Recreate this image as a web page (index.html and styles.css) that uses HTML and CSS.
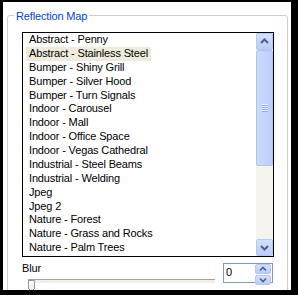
FILE: index.html
```html
<!DOCTYPE html>
<html>
<head>
<meta charset="utf-8">
<link rel="stylesheet" href="styles.css">
</head>
<body>
<div class="panel">
  <div class="group">
    <span class="legend">Reflection Map</span>
    <div class="listbox">
      <ul class="items">
        <li><span class="txt">Abstract - Penny</span></li>
        <li><span class="txt sel">Abstract - Stainless Steel</span></li>
        <li><span class="txt">Bumper - Shiny Grill</span></li>
        <li><span class="txt">Bumper - Silver Hood</span></li>
        <li><span class="txt">Bumper - Turn Signals</span></li>
        <li><span class="txt">Indoor - Carousel</span></li>
        <li><span class="txt">Indoor - Mall</span></li>
        <li><span class="txt">Indoor - Office Space</span></li>
        <li><span class="txt">Indoor - Vegas Cathedral</span></li>
        <li><span class="txt">Industrial - Steel Beams</span></li>
        <li><span class="txt">Industrial - Welding</span></li>
        <li><span class="txt">Jpeg</span></li>
        <li><span class="txt">Jpeg 2</span></li>
        <li><span class="txt">Nature - Forest</span></li>
        <li><span class="txt">Nature - Grass and Rocks</span></li>
        <li><span class="txt">Nature - Palm Trees</span></li>
      </ul>
      <div class="vscroll">
        <div class="sbtn">
          <svg width="15" height="15" viewBox="0 0 15 15"><polyline points="4,9 7.5,5.5 11,9" fill="none" stroke="#4d6185" stroke-width="2"/></svg>
        </div>
        <div class="strack">
          <div class="sthumb">
            <svg width="8" height="8" viewBox="0 0 8 8">
              <rect x="1" y="0" width="6" height="1" fill="#eef4fe"/>
              <rect x="1" y="1" width="6" height="1" fill="#8cabee"/>
              <rect x="1" y="2" width="6" height="1" fill="#eef4fe"/>
              <rect x="1" y="3" width="6" height="1" fill="#8cabee"/>
              <rect x="1" y="4" width="6" height="1" fill="#eef4fe"/>
              <rect x="1" y="5" width="6" height="1" fill="#8cabee"/>
              <rect x="1" y="6" width="6" height="1" fill="#eef4fe"/>
              <rect x="1" y="7" width="6" height="1" fill="#8cabee"/>
            </svg>
          </div>
        </div>
        <div class="sbtn">
          <svg width="15" height="15" viewBox="0 0 15 15"><polyline points="4,6 7.5,9.5 11,6" fill="none" stroke="#4d6185" stroke-width="2"/></svg>
        </div>
      </div>
    </div>
    <div class="blur-row">
      <div class="blur-left">
        <div class="label">Blur</div>
        <div class="slider">
          <span class="track"></span>
          <svg class="knob" width="9" height="14" viewBox="0 0 9 14">
            <defs><linearGradient id="kg" x1="0" y1="0" x2="0" y2="1"><stop offset="0" stop-color="#ffffff"/><stop offset="1" stop-color="#e6e5df"/></linearGradient></defs>
            <path d="M1.5,0.5 H7.5 V8.5 L4.5,11.5 L1.5,8.5 Z" fill="url(#kg)" stroke="#8f989e"/>
            <path d="M1.5,8.5 L4.5,11.5 L7.5,8.5" fill="none" stroke="#3dad3d"/>
          </svg>
        </div>
      </div>
      <div class="spin">
        <div class="spin-val">0</div>
        <div class="spin-btns">
          <div class="spb">
            <svg width="14" height="8" viewBox="0 0 14 8"><polyline points="4,5.5 7,2.5 10,5.5" fill="none" stroke="#4d6185" stroke-width="1.6"/></svg>
          </div>
          <div class="spb">
            <svg width="14" height="8" viewBox="0 0 14 8"><polyline points="4,2.5 7,5.5 10,2.5" fill="none" stroke="#4d6185" stroke-width="1.6"/></svg>
          </div>
        </div>
      </div>
    </div>
  </div>
</div>
</body>
</html>
```

FILE: styles.css
```css
html, body {
  margin: 0;
  padding: 0;
}
body {
  background: #000;
  width: 298px;
  height: 295px;
  overflow: hidden;
  font-family: "Liberation Sans", Arial, sans-serif;
  font-size: 11px;
  letter-spacing: -0.15px;
  color: #000;
}
.panel {
  margin: 2px 0 0 3px;
  width: 288px;
  height: 288px;
  background: #fff;
  overflow: hidden;
}
.group {
  position: relative;
  margin: 13px 3px 0 4px;
  height: 320px;
  border: 1px solid #d0d0bf;
  border-radius: 3px;
  padding: 16px 13px 0 14px;
}
.legend {
  position: absolute;
  left: 6px;
  top: -6px;
  padding: 0 2px;
  background: #fff;
  color: #0046d5;
  line-height: 13px;
}
.listbox {
  display: flex;
  width: 252px;
  height: 225px;
  box-sizing: border-box;
  border: 1px solid #000;
  background: #fff;
}
.items {
  flex: 1;
  margin: 0;
  padding: 0 0 0 3px;
  list-style: none;
  overflow: hidden;
}
.items li {
  height: 13.875px;
  line-height: 13.875px;
  white-space: nowrap;
}
.txt {
  display: inline-block;
  padding: 0 3px;
}
.sel {
  background: #efebdc;
}
.vscroll {
  width: 17px;
  display: flex;
  flex-direction: column;
  background: #f5f4ef;
}
.sbtn {
  height: 17px;
  box-sizing: border-box;
  border: 1px solid #b5c8f3;
  border-radius: 2px;
  background: linear-gradient(to bottom, #d3e0fd, #b9cdf9);
  display: flex;
  align-items: center;
  justify-content: center;
}
.sbtn svg {
  display: block;
}
.strack {
  flex: 1;
  display: flex;
  flex-direction: column;
}
.sthumb {
  height: 116px;
  box-sizing: border-box;
  border: 1px solid #adc3f3;
  border-radius: 2px;
  background: linear-gradient(to right, #cbdafc, #bccffa);
  display: flex;
  align-items: center;
  justify-content: center;
}
.sthumb svg {
  display: block;
}
.blur-row {
  display: flex;
  align-items: flex-start;
  margin-top: 5px;
  width: 252px;
}
.blur-left {
  flex: 1;
}
.label {
  line-height: 13px;
}
.slider {
  position: relative;
  margin-top: 4px;
  height: 12px;
}
.track {
  display: block;
  margin: 2px 8px 0 6px;
  height: 3px;
  border-top: 1px solid #a4a39d;
  border-left: 1px solid #a4a39d;
  border-bottom: 1px solid #fff;
  background: #f1efe6;
}
.knob {
  position: absolute;
  left: 5px;
  top: 1px;
  display: block;
}
.spin {
  display: flex;
  width: 50px;
  height: 20px;
  box-sizing: border-box;
  margin: 1px 1px 0 0;
  border: 1px solid #7f9db9;
  background: #fff;
}
.spin-val {
  flex: 1;
  padding-left: 2px;
  line-height: 17px;
}
.spin-btns {
  width: 16px;
  display: flex;
  flex-direction: column;
  gap: 1px;
  padding: 0 1px 0 0;
}
.spb {
  flex: 1;
  box-sizing: border-box;
  border: 1px solid #b5c8f3;
  border-radius: 2px;
  background: linear-gradient(to bottom, #d3e0fd, #b9cdf9);
  display: flex;
  align-items: center;
  justify-content: center;
}
.spb svg {
  display: block;
}
```
